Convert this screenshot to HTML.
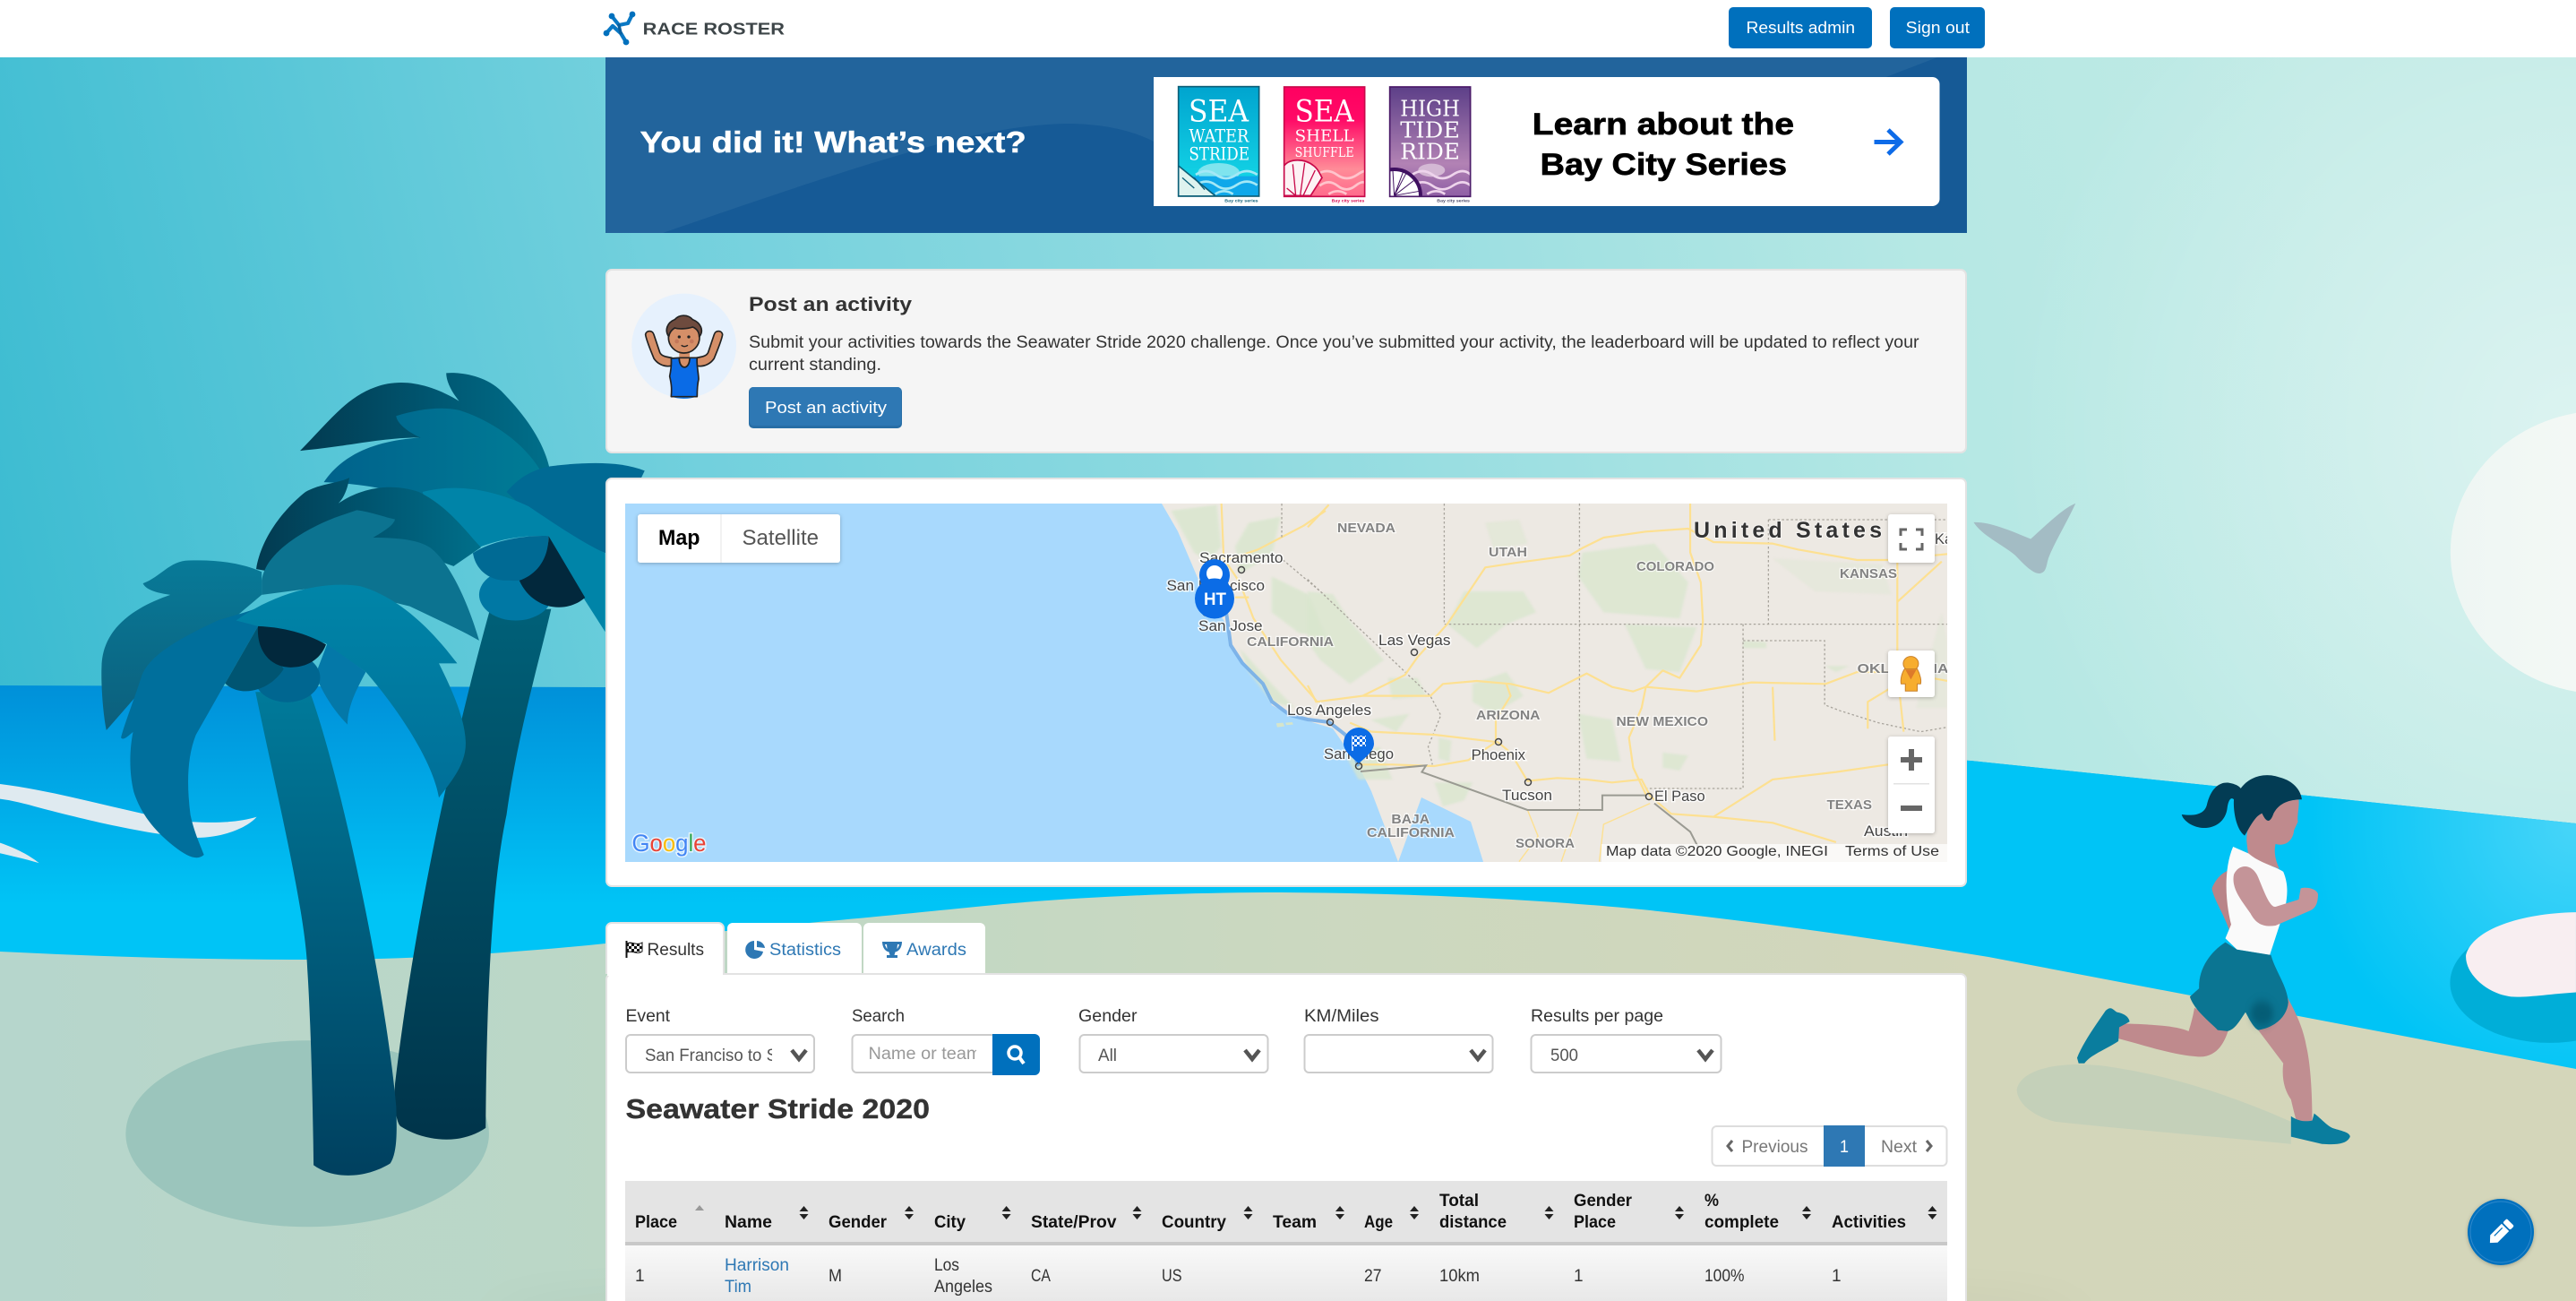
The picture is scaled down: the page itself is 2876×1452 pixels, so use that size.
<!DOCTYPE html>
<html lang="en"><head><meta charset="utf-8"><title>Seawater Stride 2020 - Race Roster</title>
<style>
html,body{margin:0;padding:0;width:2876px;height:1452px;overflow:hidden;background:#fff}
svg{display:block}
text{font-family:"Liberation Sans",Arial,sans-serif;font-size:19px;fill:#333}
.b{font-weight:700}
.h{font-weight:700;fill:#111}
.c{font-size:16.5px;fill:#444;paint-order:stroke;stroke:#fff;stroke-width:3px;stroke-opacity:.8}
.s{font-size:15px;font-weight:700;fill:#828282;paint-order:stroke;stroke:#fff;stroke-width:2.5px;stroke-opacity:.7}
.r{fill:none;stroke:#fde091;stroke-width:2.2;vector-effect:non-scaling-stroke;stroke-linejoin:round}
.d{fill:none;stroke:#a8a49c;stroke-width:1.3;stroke-dasharray:2.5 2.5;vector-effect:non-scaling-stroke}
.ser{font-family:"DejaVu Serif","Liberation Serif",serif;fill:#fff}
.sel{fill:#fff;stroke:#ccc;stroke-width:2}
.ch{fill:none;stroke:#555;stroke-width:4.5}
.sort{fill:#222}
</style></head><body>
<svg xmlns="http://www.w3.org/2000/svg" width="2876" height="1452" viewBox="0 0 2876 1452">
<defs>
<linearGradient id="sky" gradientUnits="userSpaceOnUse" x1="0" y1="800" x2="2600" y2="200"><stop offset="0" stop-color="#3abbd1"/><stop offset=".31" stop-color="#72d0dd"/><stop offset=".83" stop-color="#b6e8e4"/><stop offset="1" stop-color="#bfeae5"/></linearGradient>
<radialGradient id="glow" gradientUnits="userSpaceOnUse" cx="2876" cy="480" r="640"><stop offset="0" stop-color="#fff" stop-opacity=".45"/><stop offset="1" stop-color="#fff" stop-opacity="0"/></radialGradient>
<linearGradient id="sea" gradientUnits="userSpaceOnUse" x1="0" y1="765" x2="0" y2="1010"><stop offset="0" stop-color="#0090d9"/><stop offset="1" stop-color="#00c4f6"/></linearGradient>
<linearGradient id="seaR" gradientUnits="userSpaceOnUse" x1="700" y1="0" x2="1500" y2="0"><stop offset="0" stop-color="#00c4f6" stop-opacity="0"/><stop offset="1" stop-color="#00c4f6"/></linearGradient>
<radialGradient id="seaG" gradientUnits="userSpaceOnUse" cx="2876" cy="920" r="300"><stop offset="0" stop-color="#fff" stop-opacity=".28"/><stop offset="1" stop-color="#fff" stop-opacity="0"/></radialGradient>
<linearGradient id="sand" gradientUnits="userSpaceOnUse" x1="0" y1="0" x2="2876" y2="0"><stop offset="0" stop-color="#b6d6cc"/><stop offset=".25" stop-color="#bcd7c6"/><stop offset=".5" stop-color="#cbd8c0"/><stop offset=".77" stop-color="#d3d6ba"/><stop offset="1" stop-color="#d4d6ba"/></linearGradient>
<linearGradient id="tr1" x1="0" y1="0" x2="0" y2="1"><stop offset="0" stop-color="#007a9a"/><stop offset="1" stop-color="#00405f"/></linearGradient>
<linearGradient id="tr2" x1="0" y1="0" x2="0" y2="1"><stop offset="0" stop-color="#006078"/><stop offset="1" stop-color="#00344a"/></linearGradient>
<linearGradient id="f1" x1="0" y1="0" x2="1" y2="0"><stop offset="0" stop-color="#023a50"/><stop offset=".6" stop-color="#005a75"/><stop offset="1" stop-color="#006f8a"/></linearGradient>
<linearGradient id="f2" x1="0" y1="0" x2="1" y2="0"><stop offset="0" stop-color="#00628c"/><stop offset="1" stop-color="#007d96"/></linearGradient>
<linearGradient id="f3" x1="0" y1="0" x2="0" y2="1"><stop offset="0" stop-color="#0085a8"/><stop offset="1" stop-color="#006f98"/></linearGradient>
<linearGradient id="f4" x1="0" y1="0" x2="0" y2="1"><stop offset="0" stop-color="#087a98"/><stop offset="1" stop-color="#0c5f7c"/></linearGradient>
<linearGradient id="sun" x1="0" y1="0" x2="1" y2="0"><stop offset="0" stop-color="#eef6f3"/><stop offset="1" stop-color="#fbfcf8"/></linearGradient>
<linearGradient id="row" x1="0" y1="0" x2="0" y2="1"><stop offset="0" stop-color="#f9f9f9"/><stop offset="1" stop-color="#e8e8e8"/></linearGradient>
<linearGradient id="p1" x1="0" y1="0" x2="0" y2="1"><stop offset="0" stop-color="#00a4cf"/><stop offset=".8" stop-color="#12d0e4"/></linearGradient>
<linearGradient id="p2" x1="0" y1="0" x2="0" y2="1"><stop offset="0" stop-color="#ff0060"/><stop offset=".3" stop-color="#ff0a66"/><stop offset=".75" stop-color="#ff8c98"/><stop offset="1" stop-color="#ff6a8c"/></linearGradient>
<linearGradient id="p3" x1="0" y1="0" x2="0" y2="1"><stop offset="0" stop-color="#5c3f88"/><stop offset=".7" stop-color="#b282b4"/><stop offset="1" stop-color="#8f5fa5"/></linearGradient>
<pattern id="chk" width="6" height="6" patternUnits="userSpaceOnUse"><rect width="6" height="6" fill="#fff"/><rect width="3" height="3" fill="#111"/><rect x="3" y="3" width="3" height="3" fill="#111"/></pattern>
<pattern id="chw" width="6" height="6" patternUnits="userSpaceOnUse"><rect width="6" height="6" fill="#fff"/><rect width="3" height="3" fill="#0b6ce6"/><rect x="3" y="3" width="3" height="3" fill="#0b6ce6"/></pattern>
<clipPath id="mapc"><rect x="698" y="562" width="1476" height="400"/></clipPath>
<filter id="bl" x="-50%" y="-50%" width="200%" height="200%"><feGaussianBlur stdDeviation="8"/></filter>
<filter id="bg" x="-10%" y="-10%" width="120%" height="120%"><feGaussianBlur stdDeviation="3"/></filter>
<filter id="bb" x="-50%" y="-100%" width="200%" height="300%"><feGaussianBlur stdDeviation="28"/></filter>
<filter id="sh" x="-20%" y="-20%" width="140%" height="140%"><feDropShadow dx="0" dy="1" stdDeviation="2" flood-opacity=".25"/></filter>
<clipPath id="c1"><rect x="137" y="80" width="270" height="367"/></clipPath>
<clipPath id="c2"><rect x="491" y="81" width="270" height="367"/></clipPath>
<clipPath id="c3"><rect x="845" y="81" width="270" height="367"/></clipPath>
<clipPath id="ev"><rect x="715" y="1155" width="147" height="42"/></clipPath>
<clipPath id="se"><rect x="960" y="1155" width="130" height="42"/></clipPath>
</defs>

<!-- BACKGROUND -->
<rect width="2876" height="1452" fill="url(#sky)"/>
<rect x="1800" y="64" width="1076" height="900" fill="url(#glow)"/>
<g transform="translate(2200,480) scale(.4311,.62)">
<ellipse cx="1640" cy="220" rx="397" ry="255" fill="url(#sun)"/>
</g>
<path d="M0,765L676,767L2200,849L2876,919V1300H0Z" fill="url(#sea)"/>
<path d="M700,780L2200,849L2876,919V1300H700Z" fill="url(#seaR)"/>
<path d="M2400,869L2876,919V1300H2400Z" fill="url(#seaG)"/>
<g transform="translate(0,700) scale(.4464,.3333)">
<path d="M0,525C120,545 240,590 360,625C420,650 560,670 642,635C620,670 560,705 490,705C380,700 200,640 100,605C60,590 30,580 0,575Z" fill="#dfeaf0"/>
<path d="M0,722C40,740 75,765 98,790C60,775 25,765 0,757Z" fill="#dfeaf0"/>
</g>
<g transform="translate(2200,480) scale(.4311,.62)">
<ellipse cx="1500" cy="995" rx="258" ry="108" fill="#00aed8"/>
<path d="M1283,945C1300,900 1420,870 1568,868V1012C1500,1015 1440,1022 1400,1020C1340,1015 1280,980 1283,945Z" fill="#f8eef1"/>
</g>
<path d="M0,1062C120,1068 230,1071 350,1071C450,1071 560,1065 676,1053C780,1042 860,1034 925,1028C1000,1021 1050,1016 1120,1009C1220,1000 1330,996 1430,996C1600,997 1760,1006 1878,1020C2000,1034 2110,1050 2220,1068L2876,1193V1452H0Z" fill="url(#sand)"/>
<ellipse cx="1436" cy="1470" rx="900" ry="30" fill="#000" opacity=".05" filter="url(#bb)"/>

<!-- PALMS -->
<g transform="translate(80,380) scale(.408,.6378)">
<ellipse cx="645" cy="1388" rx="497" ry="163" fill="#9bc5bc"/>
<path d="M625,193C700,145 750,100 830,82C900,65 980,75 1060,106C1040,90 1025,72 1025,57C1060,55 1130,60 1175,88C1240,130 1290,175 1307,222L1200,260L950,170C850,170 760,185 625,193Z" fill="url(#f1)"/>
<path d="M690,248C740,200 830,175 955,170C920,160 890,145 888,132C950,120 1010,115 1060,122C1150,140 1240,180 1285,230L1310,340L1000,290C900,260 780,250 690,248Z" fill="url(#f2)"/>
<path d="M1190,265C1230,235 1270,225 1310,220C1400,213 1500,210 1568,228L1460,372L1300,330Z" fill="#006a94"/>
<path d="M960,265C1050,250 1150,260 1250,290C1320,320 1400,355 1460,372V510L1400,450L1305,342C1230,340 1150,350 1095,368L1045,395C1000,340 980,300 960,265Z" fill="#0084a8"/>
<path d="M1145,470C1080,620 950,950 885,1300C880,1340 890,1370 900,1375C960,1400 1060,1410 1133,1378C1135,1150 1150,950 1190,830C1220,690 1280,560 1312,470Z" fill="url(#tr2)"/>
<ellipse cx="1215" cy="445" rx="100" ry="45" fill="#0078a4"/>
<path d="M1098,372C1150,350 1240,340 1305,342L1300,400C1260,425 1220,420 1190,420C1140,420 1105,400 1098,372Z" fill="#006a94"/>
<path d="M1305,342L1405,450C1350,480 1260,470 1225,420C1270,410 1305,385 1305,342Z" fill="#02283c"/>
<path d="M503,615C560,790 640,1000 645,1100C655,1200 660,1340 662,1443C720,1470 810,1465 872,1440C892,1420 890,1380 888,1340C860,1140 740,770 652,615Z" fill="url(#tr1)"/>
<path d="M505,400C520,340 590,290 640,265C680,250 730,250 760,240C755,260 745,275 730,285C800,255 880,250 950,265C1030,290 1080,335 1120,362L1045,395L825,345L680,420Z" fill="url(#f1)"/>
<path d="M520,420C530,370 640,330 720,310L780,297C820,300 860,310 885,313C880,325 850,335 825,345C900,345 950,350 980,362C1040,390 1090,470 1115,525C1060,505 990,485 925,465L700,430L520,445Z" fill="#0c7390"/>
<path d="M195,425C240,415 270,385 320,385C400,383 470,390 520,405V445L400,510L180,620L95,682C85,650 80,600 82,570C85,500 180,465 270,445C240,442 205,438 195,425Z" fill="url(#f4)"/>
<path d="M500,470L510,500L420,600L340,690C315,730 315,780 325,830C335,860 350,880 362,900C345,910 320,905 280,885C230,860 190,830 170,790C155,750 160,710 168,685C150,695 140,700 135,695C145,670 170,630 190,590C210,550 300,520 400,490C450,480 480,475 500,470Z" fill="#006f9c"/>
<path d="M670,580L700,530L805,580C780,610 755,640 755,672C720,650 690,620 670,590Z" fill="#0478a8"/>
<path d="M450,490C560,440 690,420 790,430C900,450 990,510 1055,565H1005C1040,610 1075,660 1078,700C1082,740 1040,770 1005,800C990,740 900,650 805,580L695,530L510,500Z" fill="url(#f3)"/>
<ellipse cx="590" cy="590" rx="90" ry="43" fill="#006690"/>
<path d="M510,500L420,600C460,625 540,615 580,575Z" fill="#005572"/>
<path d="M510,500C580,502 640,512 696,532C680,560 640,572 600,572C540,572 505,540 510,500Z" fill="#02283c"/>
</g>

<!-- BIRD + RUNNER -->
<g transform="translate(2200,480) scale(.4311,.62)">
<path d="M8,166C50,165 100,180 156,196C190,175 240,140 272,132C250,165 220,200 205,225C195,240 200,255 180,258C160,260 130,235 115,225C80,205 30,190 8,166Z" fill="#a3bcc4"/>
<path d="M120,1187C130,1150 230,1135 350,1145C500,1160 650,1190 830,1245V1285C600,1270 350,1255 220,1245C160,1235 120,1210 120,1187Z" fill="#c4d0b9"/>
<path d="M625,825C640,800 665,790 690,790V900H670C655,870 630,845 625,825Z" fill="#b98488"/>
<path d="M580,1040C575,1060 570,1070 565,1082C530,1072 470,1070 385,1068L380,1095C440,1105 520,1125 590,1128C640,1130 660,1100 670,1075Z" fill="#bf8a8d"/>
<path d="M715,1045L745,1080L810,1140C805,1170 815,1190 830,1205C835,1220 840,1235 845,1245H885C885,1190 880,1140 870,1110C860,1070 835,1040 820,1020Z" fill="#c08e91"/>
<path d="M715,740C715,700 740,680 790,670L850,665C852,680 845,695 848,705L838,720C835,740 815,750 790,745C785,760 790,775 800,790L720,770Z" fill="#bf8a8d"/>
<path d="M680,750L720,762C750,780 790,785 810,795C825,820 820,840 815,860L775,945L690,935L660,915L675,890C660,850 655,790 680,750Z" fill="#fafafa"/>
<path d="M660,922L690,935L778,945C790,975 820,1000 823,1030C820,1055 790,1075 745,1080C730,1075 715,1050 712,1048C700,1060 685,1080 665,1082L640,1080C620,1065 580,1045 568,1020L592,1005C590,970 620,940 660,922Z" fill="#0b7592"/>
<ellipse cx="755" cy="1050" rx="30" ry="22" fill="#06485f" filter="url(#bl)" opacity=".55"/>
<path d="M682,800C695,780 730,780 745,805C760,830 775,860 790,858L850,845L855,825C870,822 895,825 900,835C900,850 895,860 880,865L790,892C760,895 740,890 725,870C700,845 675,825 682,800Z" fill="#c49498"/>
<path d="M547,692C580,695 605,692 612,675C620,650 640,632 670,635C685,637 695,640 700,645C720,625 760,615 800,625C830,630 855,645 858,665C830,665 800,670 785,690C775,710 765,705 755,690C735,695 720,720 710,730C690,720 680,690 682,665C675,660 668,665 665,680C660,710 620,720 590,715C570,712 550,702 547,692Z" fill="#033c54"/>
<path d="M276,1130C290,1105 320,1075 350,1045C365,1035 370,1045 380,1048C395,1050 410,1055 412,1065L385,1075L383,1100C350,1115 310,1125 295,1140H280Z" fill="#0a7d9e"/>
<path d="M830,1235C850,1245 870,1245 885,1243L890,1230C910,1240 925,1255 945,1258C965,1262 983,1265 983,1272C975,1285 950,1287 910,1285L830,1272Z" fill="#0a7d9e"/>
</g>

<!-- FAB -->
<circle cx="2792" cy="1375" r="37" fill="#0070bd" filter="url(#sh)"/>
<circle cx="2792" cy="1375" r="34" fill="none" stroke="#2e88cc" stroke-width="1"/>
<g transform="translate(2792,1375) rotate(-45) scale(.9)" fill="#fff"><path d="M-19,0L-12,-6.5H8V6.5H-12Z"/><rect x="10" y="-6.5" width="7" height="13" rx="2"/><rect x="-9" y="-3" width="14" height="1.4" fill="#0070bd"/></g>

<!-- HEADER -->
<rect width="2876" height="64" fill="#fff"/>
<g fill="none" stroke-linecap="round" stroke-linejoin="round" stroke="#0a78c4" stroke-width="4.2">
<path d="M677,37L684,29L693,37L699,47"/>
<path d="M683,18L691,28L701,26L706,16"/>
<path d="M691,28L693,37" stroke="#0a5f9e" stroke-width="3.4"/>
</g>
<g fill="#0070bd"><circle cx="683" cy="18" r="3.4"/><circle cx="706" cy="16" r="3.4"/><circle cx="677" cy="37" r="3.4"/><circle cx="699" cy="47" r="3.4"/></g>
<text x="717.700" y="38.500" textLength="158.300" lengthAdjust="spacingAndGlyphs" class="b" style="font-size:18px;fill:#3d4548">RACE ROSTER</text>
<rect x="1930" y="8" width="160" height="46" rx="5" fill="#0070bd"/>
<rect x="2110" y="8" width="106" height="46" rx="5" fill="#0070bd"/>
<text x="1949.500" y="37" textLength="121.500" lengthAdjust="spacingAndGlyphs" style="font-size:18px;fill:#fff">Results admin</text>
<text x="2127.700" y="37" textLength="71.300" lengthAdjust="spacingAndGlyphs" style="font-size:18px;fill:#fff">Sign out</text>

<!-- BANNER -->
<rect x="676" y="64" width="1520" height="196" fill="#165a96"/>
<path d="M676,64H2163L2090,92L1300,165C1270,145 1230,138 1190,138C1100,140 1000,170 740,260H676Z" fill="#22649c"/>
<text x="714.700" y="170" textLength="431" lengthAdjust="spacingAndGlyphs" class="b" style="font-size:33px;fill:#fff;stroke:#fff;stroke-width:.5">You did it! What’s next?</text>
<path d="M1288,86H2157.500a8,8 0 0 1 8,8V222a8,8 0 0 1 -8,8H1288Z" fill="#fff"/>
<text x="1710.800" y="150" textLength="292.200" lengthAdjust="spacingAndGlyphs" class="b" style="font-size:34px;fill:#000;stroke:#000;stroke-width:.7">Learn about the</text>
<text x="1719.700" y="195" textLength="275.300" lengthAdjust="spacingAndGlyphs" class="b" style="font-size:34px;fill:#000;stroke:#000;stroke-width:.7">Bay City Series</text>
<path d="M2092.500,158.500H2122M2108,145L2122,158.500L2108,172" fill="none" stroke="#0d6be8" stroke-width="5"/>
<!-- posters -->
<g transform="translate(1270,70) scale(.3333)">
<rect x="137" y="80" width="270" height="367" fill="url(#p1)"/>
<g clip-path="url(#c1)">
<ellipse cx="272" cy="368" rx="70" ry="32" fill="#7fe4ee"/>
<rect x="137" y="380" width="270" height="67" fill="#10a8ea"/>
<path d="M195,375q35,-24 68,0t68,0t70,0M195,410q35,-24 68,0t68,0t70,0M260,440q30,-20 60,0" fill="none" stroke="#a4e8f6" stroke-width="8"/>
<path d="M137,345L262,447H137Z" fill="#dff3ef" stroke="#0e5f78" stroke-width="5"/>
<path d="M150,385L190,420M190,385L225,425" stroke="#0e5f78" stroke-width="4"/>
</g>
<rect x="137" y="80" width="270" height="367" fill="none" stroke="#0e5f78" stroke-width="5"/>
<text x="171" y="197" textLength="201" lengthAdjust="spacingAndGlyphs" class="ser" style="font-size:100px">SEA</text>
<text x="172" y="265" textLength="201" lengthAdjust="spacingAndGlyphs" class="ser" style="font-size:60px">WATER</text>
<text x="172" y="325" textLength="203" lengthAdjust="spacingAndGlyphs" class="ser" style="font-size:60px">STRIDE</text>
<text x="292" y="466" textLength="112" lengthAdjust="spacingAndGlyphs" class="b" style="font-size:14px;fill:#0e5f78">Bay city series</text>

<rect x="491" y="81" width="270" height="367" fill="url(#p2)"/>
<g clip-path="url(#c2)">
<path d="M600,375q35,-24 68,0t68,0t30,0M610,412q30,-24 60,0t60,0t40,0M640,440q30,-20 60,0" fill="none" stroke="#ffc4cc" stroke-width="8"/>
<path d="M491,345C510,320 560,320 590,345C605,355 612,375 618,385L580,445H491Z" fill="#fdf2f4" stroke="#c80a4a" stroke-width="5"/>
<path d="M530,445L520,340M545,445L560,335M555,445L595,360M500,420L530,445" stroke="#c80a4a" stroke-width="4" fill="none"/>
</g>
<rect x="491" y="81" width="270" height="367" fill="none" stroke="#c80a4a" stroke-width="5"/>
<text x="527" y="197" textLength="198" lengthAdjust="spacingAndGlyphs" class="ser" style="font-size:100px">SEA</text>
<text x="527" y="262" textLength="198" lengthAdjust="spacingAndGlyphs" class="ser" style="font-size:52px">SHELL</text>
<text x="527" y="315" textLength="198" lengthAdjust="spacingAndGlyphs" class="ser" style="font-size:46px">SHUFFLE</text>
<text x="650" y="466" textLength="110" lengthAdjust="spacingAndGlyphs" class="b" style="font-size:14px;fill:#d80a50">Bay city series</text>

<rect x="845" y="81" width="270" height="367" fill="url(#p3)"/>
<g clip-path="url(#c3)">
<ellipse cx="985" cy="360" rx="45" ry="22" fill="#d4b8d4"/>
<path d="M920,375q35,-24 68,0t68,0t60,0M920,412q35,-24 68,0t68,0t60,0M970,440q30,-20 60,0" fill="none" stroke="#eed4ec" stroke-width="8"/>
<circle cx="860" cy="445" r="88" fill="#fff" stroke="#3f1060" stroke-width="12"/>
<path d="M860,445L855,360M860,445L890,365M860,445L925,395M860,445L945,430M860,445L900,370" stroke="#3f1060" stroke-width="3"/>
</g>
<rect x="845" y="81" width="270" height="367" fill="none" stroke="#4a1a68" stroke-width="5"/>
<text x="880" y="178" textLength="200" lengthAdjust="spacingAndGlyphs" class="ser" style="font-size:72px">HIGH</text>
<text x="880" y="250" textLength="200" lengthAdjust="spacingAndGlyphs" class="ser" style="font-size:72px">TIDE</text>
<text x="880" y="323" textLength="200" lengthAdjust="spacingAndGlyphs" class="ser" style="font-size:72px">RIDE</text>
<text x="1003" y="466" textLength="110" lengthAdjust="spacingAndGlyphs" class="b" style="font-size:14px;fill:#4a4a6a">Bay city series</text>
</g>

<!-- POST PANEL -->
<rect x="677" y="301" width="1518" height="204" rx="6" fill="#f5f5f5" stroke="#e3e3e3" stroke-width="2"/>
<g transform="translate(690,310) scale(.3333)" stroke="#222" stroke-width="5" stroke-linejoin="round">
<circle cx="221" cy="228" r="175" fill="#e6f1fd" stroke="none"/>
<path d="M92,190C95,175 115,175 120,190L140,250C145,262 160,265 180,268L178,295C150,300 130,285 120,270C110,245 95,210 92,190Z" fill="#d58f68"/>
<path d="M350,190C347,175 327,175 322,190L302,250C297,262 282,265 262,268L264,295C292,300 312,285 322,270C332,245 347,210 350,190Z" fill="#d58f68"/>
<path d="M178,398Q221,412 265,398Z" fill="#1a80ef" stroke="none"/>
<rect x="205" y="245" width="35" height="40" fill="#d58f68" stroke="none"/>
<path d="M178,270L205,268C205,310 240,310 240,268L265,268C262,290 270,320 270,340C265,360 265,380 265,398H178C180,375 180,360 173,330C178,305 180,290 178,270Z" fill="#0a6be6"/>
<path d="M205,268C205,310 240,310 240,268Z" fill="#d58f68"/>
<ellipse cx="221" cy="200" rx="52" ry="52" fill="#d58f68"/>
<path d="M170,197C155,175 165,150 190,140C205,122 235,122 250,140C275,150 290,175 272,198C272,180 262,170 250,165C230,172 200,172 190,168C178,175 172,185 170,197Z" fill="#6e4b3e"/>
<circle cx="205" cy="198" r="5" fill="#222" stroke="none"/><circle cx="237" cy="198" r="5" fill="#222" stroke="none"/>
<circle cx="197" cy="213" r="7" fill="#c4775a" stroke="none"/><circle cx="247" cy="213" r="7" fill="#c4775a" stroke="none"/>
<path d="M212,226Q222,234 234,226" fill="none" stroke-width="4"/>
</g>
<text x="836" y="347" textLength="182" lengthAdjust="spacingAndGlyphs" class="b" style="font-size:22px">Post an activity</text>
<text x="836" y="388" textLength="1306.600" lengthAdjust="spacingAndGlyphs">Submit your activities towards the Seawater Stride 2020 challenge. Once you’ve submitted your activity, the leaderboard will be updated to reflect your</text>
<text x="836" y="413" textLength="148" lengthAdjust="spacingAndGlyphs">current standing.</text>
<rect x="836" y="432" width="171" height="46" rx="5" fill="#286ea6"/>
<rect x="837" y="432" width="169" height="43" rx="4" fill="#2e78b4"/>
<text x="854" y="461" textLength="136" lengthAdjust="spacingAndGlyphs" style="font-size:18px;fill:#fff">Post an activity</text>

<!-- MAP PANEL -->
<rect x="677" y="534" width="1518" height="455" rx="6" fill="#fff" stroke="#e3e3e3" stroke-width="2"/>
<g clip-path="url(#mapc)">
<rect x="698" y="562" width="1476" height="400" fill="#a8d9fd"/>
<path d="M1297,562L1315,593L1338,647L1369,697L1374,723L1410,763L1420,787L1445,800L1488,813L1517,855L1531,883L1561,962H1656L1642,917L1587,890L1585,962H2174V562Z" fill="#ede9e3"/>
<path d="M1561,962L1587,890L1642,917L1656,962Z" fill="#a8d9fd"/>
<!-- zoom-3 region -->
<g transform="translate(680,550) scale(.5102,.3333)">
<g fill="#d8e6cd" filter="url(#bg)" opacity=".8">
<path d="M1230,60L1330,40L1340,180L1310,230L1280,200Z"/><path d="M1400,100L1470,80L1450,210L1380,270L1370,180Z"/><path d="M1450,280L1530,340L1568,480L1510,470L1450,400Z"/><path d="M1380,520L1450,640L1500,720L1450,700L1400,600Z"/>
</g>
<path d="M1460,772L1475,770L1478,782L1462,785ZM1480,770L1495,768L1497,776L1482,778Z" fill="#d5e5cb"/>
<path class="r" d="M1340,36L1345,220L1380,300L1410,420L1470,560L1550,700"/>
<path class="r" d="M1370,350L1400,350"/>
<path class="r" d="M1470,150L1420,190L1345,230"/>
<path class="r" d="M1470,150L1520,110L1568,60"/>
<path class="d" d="M1472,36V150"/>
<path class="d" d="M1475,225L1568,345"/>
</g>
<!-- zoom-4 region -->
<g transform="translate(1460,550) scale(.4719,.3333)">
<g fill="#d8e6cd" filter="url(#bg)" opacity=".75">
<path d="M0,330L60,340L100,430L180,560L100,640L30,560L0,500Z"/><path d="M370,330L510,330L540,400L470,440L400,520L330,440Z"/><path d="M650,200L820,170L900,300L880,420L700,400L640,280Z"/><path d="M750,440L920,450L880,600L800,590Z"/><path d="M390,640L470,600L510,680L440,740L390,700Z"/><path d="M190,620L260,620L280,680L200,690Z"/><path d="M640,740L720,760L740,900L660,890Z"/><path d="M840,870L900,880L880,930L840,920Z"/><path d="M310,820L340,830L335,900L310,890Z"/><path d="M1100,220L1360,240L1380,340L1200,330Z" opacity=".4"/><path d="M300,970L390,970L370,1030L320,1050Z"/><path d="M1030,495L1085,500V520H1030Z"/><path d="M1225,580H1280L1250,600Z"/><path d="M150,760L240,740L210,800Z"/><path d="M420,100L500,90L520,170L440,190Z" opacity=".6"/><path d="M90,880L170,850L200,960L120,960Z"/><path d="M1500,400L1513,500V720L1440,720Z" opacity=".4"/>
</g>
<path class="d" d="M323,36V440H1513"/><path class="d" d="M643,36V1060"/><path class="d" d="M1090,90V440"/><path class="d" d="M1090,90H1513"/>
<path class="d" d="M1030,440V990H800"/><path class="d" d="M1030,495H1223V710L1260,730L1350,770L1450,800L1513,785"/>
<path class="d" d="M0,290L290,680L315,745L285,850L295,910"/>
<path class="r" d="M130,680L290,680L320,640L400,630L480,640L570,670L660,605L720,650L770,665L800,650L920,665L1050,635L1225,640L1300,600L1400,600L1513,630"/>
<path class="r" d="M150,800L300,810L450,835L480,870L520,965L590,955L660,960L720,970L790,960L810,1015L860,1075L960,1085L1100,960L1250,935L1373,910"/>
<path class="r" d="M120,910L200,910L300,915L380,895L445,835"/>
<path class="r" d="M130,680L230,610L260,550L330,440L420,250L490,235L620,210L650,185L700,150L800,130L900,120L960,165L1100,170L1160,190L1300,225L1373,225L1513,205"/>
<path class="r" d="M905,36V200L930,300L935,430L930,510L880,620L840,595L800,650L790,720L760,820L770,920L800,1010"/>
<path class="r" d="M1395,230V600L1410,800"/>
<path class="r" d="M960,1085L1100,1105L1250,1170"/>
<path class="r" d="M1100,650L1105,830"/><path class="r" d="M1325,790V700L1395,640"/><path class="r" d="M1395,365L1500,230"/>
<path class="r" d="M470,640L480,680L445,760V830"/>
<path class="r" d="M0,115L50,40"/><path class="r" d="M0,645L20,700L130,680"/>
<path class="r" d="M100,770L150,800"/><path class="r" d="M520,1062L545,1150L500,1235M640,1070L600,1235M810,1040L700,1110L690,1235" style="stroke-width:1.4"/>
<path fill="none" stroke="#9a9a92" stroke-width="2" vector-effect="non-scaling-stroke" d="M125,933L280,913L270,935L520,1062H697V1013H800M820,1040L905,1135L925,1190"/>
</g>
<!-- route -->
<path d="M1369,683L1371,697L1374,720L1387,740L1410,763L1420,783L1440,798L1460,803L1484,806L1502,820L1517,855" fill="none" stroke="#74aee8" stroke-width="4" opacity=".9"/>
<!-- labels -->
<text x="1493" y="594" textLength="65" lengthAdjust="spacingAndGlyphs" class="s">NEVADA</text>
<text x="1662" y="621" textLength="43" lengthAdjust="spacingAndGlyphs" class="s">UTAH</text>
<text x="1827" y="637" textLength="87" lengthAdjust="spacingAndGlyphs" class="s">COLORADO</text>
<text x="2054" y="645" textLength="64" lengthAdjust="spacingAndGlyphs" class="s">KANSAS</text>
<text x="1392" y="721" textLength="97" lengthAdjust="spacingAndGlyphs" class="s">CALIFORNIA</text>
<text x="2073.500" y="751" textLength="102" lengthAdjust="spacingAndGlyphs" class="s">OKLAHOMA</text>
<text x="1648" y="803" textLength="71.500" lengthAdjust="spacingAndGlyphs" class="s">ARIZONA</text>
<text x="1804.500" y="810" textLength="102.500" lengthAdjust="spacingAndGlyphs" class="s">NEW MEXICO</text>
<text x="2039.500" y="903" textLength="50.500" lengthAdjust="spacingAndGlyphs" class="s">TEXAS</text>
<text x="1553.400" y="919" textLength="42.600" lengthAdjust="spacingAndGlyphs" class="s">BAJA</text>
<text x="1526" y="934" textLength="98" lengthAdjust="spacingAndGlyphs" class="s">CALIFORNIA</text>
<text x="1692" y="946" textLength="66" lengthAdjust="spacingAndGlyphs" class="s">SONORA</text>
<text x="1891" y="600" textLength="210" lengthAdjust="spacing" class="b" style="font-size:25px;fill:#333;paint-order:stroke;stroke:#fff;stroke-width:2px;stroke-opacity:.6">United States</text>
<text x="2160" y="607" class="c">Ka</text>
<text x="1339" y="628" textLength="93.500" lengthAdjust="spacingAndGlyphs" class="c">Sacramento</text>
<text x="1302.500" y="659" textLength="109.500" lengthAdjust="spacingAndGlyphs" class="c">San Francisco</text>
<text x="1338" y="704" textLength="71.600" lengthAdjust="spacingAndGlyphs" class="c">San Jose</text>
<text x="1437" y="798" textLength="94" lengthAdjust="spacingAndGlyphs" class="c">Los Angeles</text>
<text x="1539" y="720" textLength="80.500" lengthAdjust="spacingAndGlyphs" class="c">Las Vegas</text>
<text x="1642.600" y="848" textLength="60.400" lengthAdjust="spacingAndGlyphs" class="c">Phoenix</text>
<text x="1478" y="847" textLength="78" lengthAdjust="spacingAndGlyphs" class="c">San Diego</text>
<text x="1677" y="893" textLength="56" lengthAdjust="spacingAndGlyphs" class="c">Tucson</text>
<text x="1847" y="894" textLength="56.600" lengthAdjust="spacingAndGlyphs" class="c">El Paso</text>
<text x="2081" y="933" textLength="49" lengthAdjust="spacingAndGlyphs" class="c">Austin</text>
<g fill="none" stroke="#444" stroke-width="1.500">
<circle cx="1386" cy="636" r="3.500"/><circle cx="1346" cy="684" r="3"/><circle cx="1579" cy="728" r="3.500"/><circle cx="1485" cy="806" r="3.500"/><circle cx="1673" cy="828" r="3.500"/><circle cx="1517" cy="855" r="3.500"/><circle cx="1706" cy="873" r="3.500"/><circle cx="1841" cy="889" r="3.500"/>
</g>
<!-- pins -->
<path d="M1356,624a17,18 0 0 1 17,18c0,10 -10,24 -17,30c-7,-6 -17,-20 -17,-30a17,18 0 0 1 17,-18Z" fill="#0b6ce6"/>
<circle cx="1356" cy="640" r="9" fill="#fff"/>
<ellipse cx="1356" cy="668" rx="22" ry="22.500" fill="#0b6ce6"/>
<text x="1344" y="675" textLength="25" lengthAdjust="spacingAndGlyphs" class="b" style="font-size:19px;fill:#fff">HT</text>
<path d="M1517,812a17,18 0 0 1 17,18c0,8 -10,16 -17,22c-7,-6 -17,-14 -17,-22a17,18 0 0 1 17,-18Z" fill="#0b6ce6"/>
<path d="M1510,821V838" stroke="#fff" stroke-width="1.500"/><rect x="1510" y="821" width="15" height="12" fill="url(#chw)"/>
<!-- google -->
<text x="705.500" y="950" textLength="83" lengthAdjust="spacingAndGlyphs" style="font-size:27px;paint-order:stroke;stroke:#fff;stroke-width:3px;stroke-opacity:.7"><tspan fill="#4285f4">G</tspan><tspan fill="#ea4335">o</tspan><tspan fill="#fbbc05">o</tspan><tspan fill="#4285f4">g</tspan><tspan fill="#34a853">l</tspan><tspan fill="#ea4335">e</tspan></text>
<rect x="1788" y="942" width="386" height="20" fill="#fff" opacity=".7"/>
<text x="1793" y="955" textLength="248" lengthAdjust="spacingAndGlyphs" style="font-size:16px;fill:#333">Map data ©2020 Google, INEGI</text>
<text x="2060" y="955" textLength="105" lengthAdjust="spacingAndGlyphs" style="font-size:16px;fill:#333">Terms of Use</text>
<!-- controls -->
<g filter="url(#sh)"><rect x="712" y="574" width="226" height="54" rx="3" fill="#fff"/></g>
<rect x="804.500" y="574" width="1" height="54" fill="#e6e6e6"/>
<text x="735" y="608" textLength="46.500" lengthAdjust="spacingAndGlyphs" class="b" style="font-size:24px;fill:#000">Map</text>
<text x="828.500" y="608" textLength="85.500" lengthAdjust="spacingAndGlyphs" style="font-size:24px;fill:#555">Satellite</text>
<g filter="url(#sh)"><rect x="2108" y="574" width="52" height="54" rx="3" fill="#fff"/><rect x="2108" y="726" width="52" height="52" rx="3" fill="#fff"/><rect x="2108" y="822" width="52" height="108" rx="3" fill="#fff"/></g>
<path d="M2122,598V591H2129M2139,591H2146V598M2146,606V613H2139M2129,613H2122V606" fill="none" stroke="#666" stroke-width="3"/>
<g transform="translate(1460,550) scale(.4719,.3333)">
<ellipse cx="1427" cy="572" rx="18" ry="24" fill="#f7ad2e" stroke="#c9802a" stroke-width="1" vector-effect="non-scaling-stroke"/>
<path d="M1412,590H1442C1450,610 1452,630 1450,640L1442,640V664H1414V640L1404,640C1402,625 1405,605 1412,590Z" fill="#f7ad2e" stroke="#c9802a" stroke-width="1" vector-effect="non-scaling-stroke"/>
<path d="M1414,592L1427,625L1440,592Z" fill="#dd7a2a"/>
</g>
<path d="M2122,848H2146M2134,836V860M2122,902H2146" stroke="#666" stroke-width="6" fill="none"/>
<rect x="2114" y="874" width="40" height="1.500" fill="#e2e2e2"/>
</g>

<!-- TABS -->
<rect x="677" y="1087" width="1518" height="380" rx="6" fill="#fff" stroke="#e3e3e3" stroke-width="2"/>
<path d="M677,1087V1036a6,6 0 0 1 6,-6H802a6,6 0 0 1 6,6V1087" fill="#fff" stroke="#e3e3e3" stroke-width="2"/>
<rect x="678" y="1082" width="129" height="7" fill="#fff"/>
<path d="M812,1086V1036a6,6 0 0 1 6,-6H956a6,6 0 0 1 6,6V1086Z" fill="#fff"/>
<path d="M964,1086V1036a6,6 0 0 1 6,-6H1094a6,6 0 0 1 6,6V1086Z" fill="#fff"/>
<path d="M699.500,1050V1069" stroke="#111" stroke-width="2"/><path d="M700,1053C705,1050 711,1056 717,1052V1062C711,1066 705,1060 700,1063Z" fill="url(#chk)" stroke="#111" stroke-width="1"/>
<text x="722.500" y="1066" textLength="63.500" lengthAdjust="spacingAndGlyphs">Results</text>
<path d="M842,1050A10,10 0 1 0 852,1062L842,1060Z" fill="#2e78b4"/><path d="M845,1050A9.500,9.500 0 0 1 854,1058L845,1057Z" fill="#2e78b4"/>
<text x="859" y="1066" textLength="80" lengthAdjust="spacingAndGlyphs" style="fill:#2e78b4">Statistics</text>
<path d="M985,1051H1007C1007,1058 1003,1062 999.500,1062.500L998.500,1066H1002V1069H990V1066H993.500L992.500,1062.500C989,1062 985,1058 985,1051ZM988,1054C988.500,1056 989.500,1058 990.500,1059L990,1054ZM1004,1054H1002L1001.500,1059C1002.500,1058 1003.500,1056 1004,1054Z" fill="#2e78b4" fill-rule="evenodd"/>
<text x="1012" y="1066" textLength="67" lengthAdjust="spacingAndGlyphs" style="fill:#2e78b4">Awards</text>

<!-- FILTERS -->
<text x="698.500" y="1140" textLength="49.500" lengthAdjust="spacingAndGlyphs">Event</text>
<text x="951" y="1140" textLength="59" lengthAdjust="spacingAndGlyphs">Search</text>
<text x="1204" y="1140" textLength="65.500" lengthAdjust="spacingAndGlyphs">Gender</text>
<text x="1456" y="1140" textLength="83.500" lengthAdjust="spacingAndGlyphs">KM/Miles</text>
<text x="1709" y="1140" textLength="148" lengthAdjust="spacingAndGlyphs">Results per page</text>
<rect x="699" y="1155" width="210" height="42" rx="5" class="sel"/>
<rect x="951.500" y="1155" width="160" height="42" rx="5" class="sel"/>
<path d="M1108,1154H1155a6,6 0 0 1 6,6V1194a6,6 0 0 1 -6,6H1108Z" fill="#0070bd"/>
<rect x="1205.500" y="1155" width="210" height="42" rx="5" class="sel"/>
<rect x="1456.500" y="1155" width="210" height="42" rx="5" class="sel"/>
<rect x="1709.500" y="1155" width="212" height="42" rx="5" class="sel"/>
<g clip-path="url(#ev)"><text x="720" y="1184" textLength="148" lengthAdjust="spacingAndGlyphs" style="fill:#555">San Franciso to S</text></g>
<g clip-path="url(#se)"><text x="969.500" y="1182" textLength="126" lengthAdjust="spacingAndGlyphs" style="fill:#999">Name or team</text></g>
<text x="1226" y="1184" textLength="21" lengthAdjust="spacingAndGlyphs" style="fill:#555">All</text>
<text x="1731" y="1184" textLength="31" lengthAdjust="spacingAndGlyphs" style="fill:#555">500</text>
<path class="ch" d="M884,1172L892,1182L900,1172"/><path class="ch" d="M1390,1172L1398,1182L1406,1172"/><path class="ch" d="M1642,1172L1650,1182L1658,1172"/><path class="ch" d="M1896,1172L1904,1182L1912,1172"/>
<circle cx="1133" cy="1175" r="7" fill="none" stroke="#fff" stroke-width="3.500"/><path d="M1138,1180L1143,1187" stroke="#fff" stroke-width="4"/>

<text x="698.500" y="1248" textLength="339.500" lengthAdjust="spacingAndGlyphs" class="b" style="font-size:31px;stroke:#333;stroke-width:.4">Seawater Stride 2020</text>

<!-- PAGINATION -->
<rect x="1911.500" y="1257" width="262" height="44" rx="5" fill="#fff" stroke="#ddd" stroke-width="2"/>
<rect x="2036" y="1256" width="46" height="46" fill="#2e78b4"/>
<path d="M1934,1273L1929,1279L1934,1285" fill="none" stroke="#666" stroke-width="3"/>
<text x="1944.500" y="1286" textLength="74" lengthAdjust="spacingAndGlyphs" style="fill:#777">Previous</text>
<text x="2054" y="1286" textLength="10" lengthAdjust="spacingAndGlyphs" style="fill:#fff">1</text>
<text x="2100" y="1286" textLength="40" lengthAdjust="spacingAndGlyphs" style="fill:#777">Next</text>
<path d="M2151,1273L2156,1279L2151,1285" fill="none" stroke="#666" stroke-width="3"/>

<!-- TABLE -->
<rect x="698" y="1318" width="1476" height="68" fill="#e4e4e4"/>
<rect x="698" y="1386" width="1476" height="4" fill="#c8c8c8"/>
<rect x="698" y="1390" width="1476" height="62" fill="url(#row)"/>
<text x="709" y="1370" textLength="47" lengthAdjust="spacingAndGlyphs" class="h">Place</text>
<text x="809" y="1370" textLength="53" lengthAdjust="spacingAndGlyphs" class="h">Name</text>
<text x="925" y="1370" textLength="65" lengthAdjust="spacingAndGlyphs" class="h">Gender</text>
<text x="1043" y="1370" textLength="35" lengthAdjust="spacingAndGlyphs" class="h">City</text>
<text x="1151" y="1370" textLength="95.500" lengthAdjust="spacingAndGlyphs" class="h">State/Prov</text>
<text x="1297" y="1370" textLength="72" lengthAdjust="spacingAndGlyphs" class="h">Country</text>
<text x="1421" y="1370" textLength="49" lengthAdjust="spacingAndGlyphs" class="h">Team</text>
<text x="1523" y="1370" textLength="32" lengthAdjust="spacingAndGlyphs" class="h">Age</text>
<text x="1607" y="1346" textLength="44" lengthAdjust="spacingAndGlyphs" class="h">Total</text>
<text x="1607" y="1370" textLength="75" lengthAdjust="spacingAndGlyphs" class="h">distance</text>
<text x="1757" y="1346" textLength="65" lengthAdjust="spacingAndGlyphs" class="h">Gender</text>
<text x="1757" y="1370" textLength="47" lengthAdjust="spacingAndGlyphs" class="h">Place</text>
<text x="1903" y="1346" textLength="16" lengthAdjust="spacingAndGlyphs" class="h">%</text>
<text x="1903" y="1370" textLength="83" lengthAdjust="spacingAndGlyphs" class="h">complete</text>
<text x="2045" y="1370" textLength="83" lengthAdjust="spacingAndGlyphs" class="h">Activities</text>
<path d="M776,1351L781,1345L786,1351Z" fill="#999"/>
<g class="sort">
<path d="M892.500,1352L897.500,1346L902.500,1352ZM892.500,1355L897.500,1361L902.500,1355Z"/>
<path d="M1010,1352L1015,1346L1020,1352ZM1010,1355L1015,1361L1020,1355Z"/>
<path d="M1118.600,1352L1123.600,1346L1128.600,1352ZM1118.600,1355L1123.600,1361L1128.600,1355Z"/>
<path d="M1264.500,1352L1269.500,1346L1274.500,1352ZM1264.500,1355L1269.500,1361L1274.500,1355Z"/>
<path d="M1388.500,1352L1393.500,1346L1398.500,1352ZM1388.500,1355L1393.500,1361L1398.500,1355Z"/>
<path d="M1491,1352L1496,1346L1501,1352ZM1491,1355L1496,1361L1501,1355Z"/>
<path d="M1574,1352L1579,1346L1584,1352ZM1574,1355L1579,1361L1584,1355Z"/>
<path d="M1724.500,1352L1729.500,1346L1734.500,1352ZM1724.500,1355L1729.500,1361L1734.500,1355Z"/>
<path d="M1870,1352L1875,1346L1880,1352ZM1870,1355L1875,1361L1880,1355Z"/>
<path d="M2012,1352L2017,1346L2022,1352ZM2012,1355L2017,1361L2022,1355Z"/>
<path d="M2152.400,1352L2157.400,1346L2162.400,1352ZM2152.400,1355L2157.400,1361L2162.400,1355Z"/>
</g>
<text x="709" y="1430">1</text>
<text x="809" y="1418" textLength="72" lengthAdjust="spacingAndGlyphs" style="fill:#2e78b4">Harrison</text>
<text x="809" y="1442" textLength="30" lengthAdjust="spacingAndGlyphs" style="fill:#2e78b4">Tim</text>
<text x="925" y="1430" textLength="15" lengthAdjust="spacingAndGlyphs">M</text>
<text x="1043" y="1418" textLength="28" lengthAdjust="spacingAndGlyphs">Los</text>
<text x="1043" y="1442" textLength="65" lengthAdjust="spacingAndGlyphs">Angeles</text>
<text x="1151" y="1430" textLength="22" lengthAdjust="spacingAndGlyphs">CA</text>
<text x="1297" y="1430" textLength="22.500" lengthAdjust="spacingAndGlyphs">US</text>
<text x="1523" y="1430" textLength="19.500" lengthAdjust="spacingAndGlyphs">27</text>
<text x="1607" y="1430" textLength="45" lengthAdjust="spacingAndGlyphs">10km</text>
<text x="1757" y="1430">1</text>
<text x="1903" y="1430" textLength="44.500" lengthAdjust="spacingAndGlyphs">100%</text>
<text x="2045" y="1430">1</text>
</svg>
</body></html>
